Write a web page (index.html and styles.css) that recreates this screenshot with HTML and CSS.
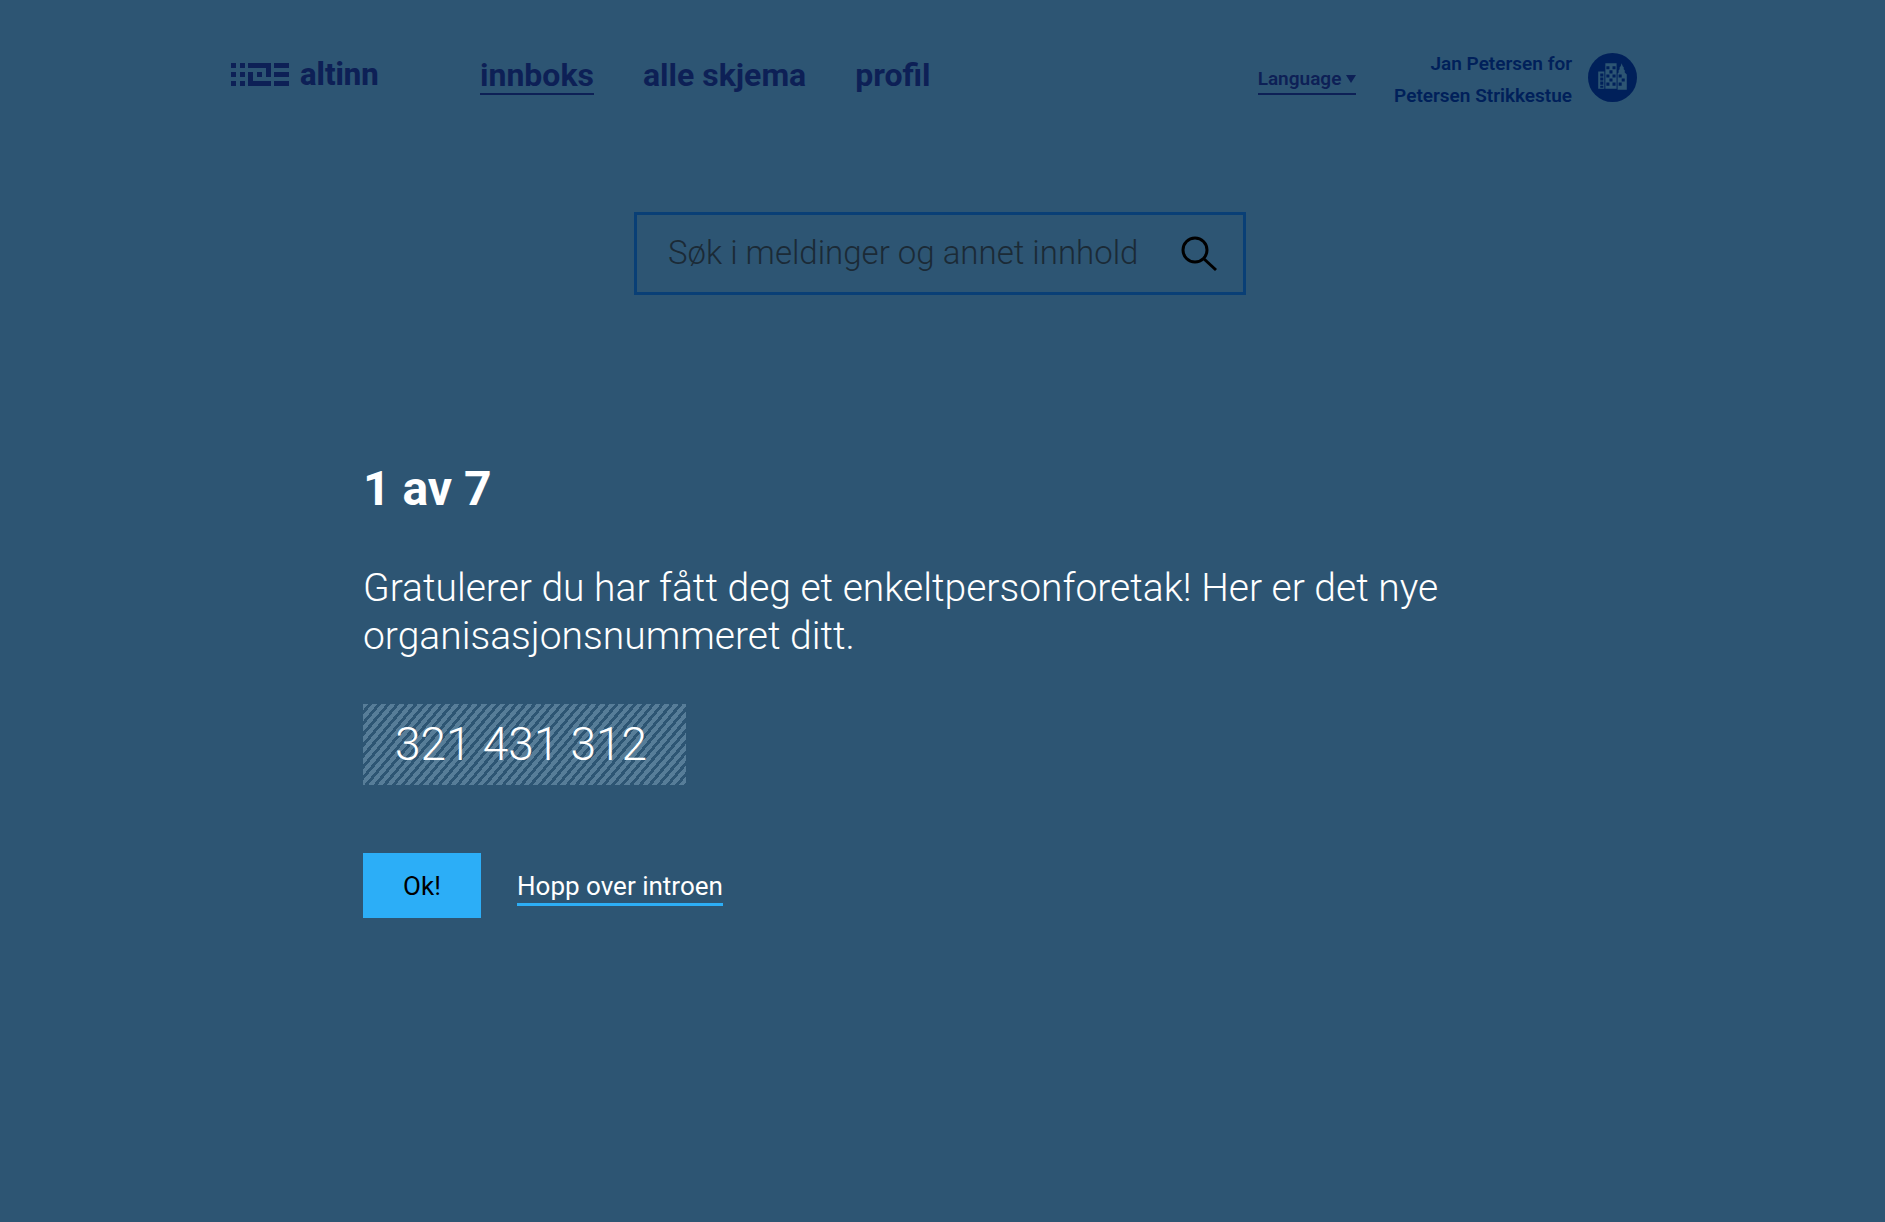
FILE: index.html
```html
<!DOCTYPE html>
<html lang="nb">
<head>
  <meta charset="utf-8">
  <meta name="viewport" content="width=device-width, initial-scale=1">
  <title>altinn – innboks</title>
  <link rel="stylesheet" href="styles.css">
</head>
<body>
  <div class="page">
    <header class="header">
      <a class="logo" href="#">
        <svg class="logo-mark" width="58" height="23" viewBox="0 0 58 23" aria-hidden="true">
          <path d="M0 0h5v5H0zM9 0h5v5H9zM0 9h5v5H0zM9 9h5v5H9zM0 18h5v5H0zM9 18h5v5H9zM26 9h5v5h-5zM43 0h15v5H43zM43 9h15v5H43zM43 18h15v5H43z"/>
          <path d="M17 0h23v14h-5V5H17zM17 9h5v9h18v5H17z"/>
        </svg>
        <span class="logo-name">altinn</span>
      </a>
      <nav class="nav">
        <a class="nav-link nav-link-active" href="#">innboks</a>
        <a class="nav-link" href="#">alle skjema</a>
        <a class="nav-link" href="#">profil</a>
      </nav>
      <button class="language" type="button">Language
        <svg width="10" height="8" viewBox="0 0 10 8" aria-hidden="true"><path d="M0 0h10L5 8z"/></svg>
      </button>
      <a class="account" href="#">
        <span class="account-name">Jan Petersen for<br>Petersen Strikkestue</span>
        <svg class="avatar" width="49" height="49" viewBox="0 0 48 48" aria-hidden="true">
          <circle class="avatar-disc" cx="24" cy="24" r="24"/>
          <path class="avatar-house" d="M10 18h6v17h-6zM17 10h11v25H17zM29 20l1-1v-2l1-1v-2l1-1 1-3 1 3 1 1v2l1 1v2l2 2v15h-9z"/>
          <path class="avatar-window" d="M12 20h3v3h-3zM12 24h3v3h-3zM12 28h3v3h-3zM12 32h3v2h-3zM18 13h3v3h-3zM24 13h3v3h-3zM21 17h3v3h-3zM18 21h3v3h-3zM24 21h3v3h-3zM21 25h3v3h-3zM18 29h3v3h-3zM24 29h3v3h-3zM30 21h3v3h-3zM33 25h3v3h-3zM30 29h3v3h-3z"/>
        </svg>
      </a>
    </header>

    <form class="search" role="search">
      <input class="search-input" type="search" aria-label="Søk i meldinger og annet innhold" placeholder="Søk i meldinger og annet innhold">
      <button class="search-button" type="submit" aria-label="Søk">
        <svg width="36" height="36" viewBox="0 0 36 36" aria-hidden="true"><circle cx="14" cy="14" r="12"/><path d="M22 22l13 12"/></svg>
      </button>
    </form>

    <main class="intro">
      <h1 class="intro-step">1 av 7</h1>
      <p class="intro-text">Gratulerer du har fått deg et enkeltpersonforetak! Her er det nye organisasjonsnummeret ditt.</p>
      <p class="number">321 431 312</p>
      <div class="actions">
        <button class="ok" type="button">Ok!</button>
        <a class="skip" href="#">Hopp over introen</a>
      </div>
    </main>
  </div>
</body>
</html>
```
FILE: styles.css
```css
* {
  box-sizing: border-box;
}

body {
  margin: 0;
  min-height: 100vh;
  background: #2d5573;
  color: #fff;
  font-family: Roboto, "Liberation Sans", sans-serif;
}

a {
  color: inherit;
  text-decoration: none;
}

button {
  margin: 0;
  padding: 0;
  border: 0;
  background: none;
  color: inherit;
  font: inherit;
  cursor: pointer;
}

.page {
  padding: 48px 24px 64px 19px;
}

.header {
  display: flex;
  align-items: flex-start;
  max-width: 1418px;
  margin: 0 auto;
  padding-right: 12px;
  color: #0d2056;
}

.logo {
  display: flex;
  align-items: center;
  gap: 11px;
  width: 249px;
  height: 52px;
  font-size: 31px;
  font-weight: 800;
}

.logo-mark {
  fill: currentColor;
}

.nav {
  display: flex;
  gap: 49px;
  font-size: 32px;
  font-weight: 700;
  line-height: 44px;
}

.nav-link {
  padding-top: 5px;
  white-space: nowrap;
}

.nav-link-active {
  height: 47px;
  border-bottom: 2px solid;
}

.language {
  height: 47px;
  margin-left: auto;
  padding-top: 16px;
  border-bottom: 2px solid;
  font-size: 19px;
  font-weight: 600;
  line-height: 30px;
  white-space: nowrap;
}

.language svg {
  fill: currentColor;
  vertical-align: 2px;
}

.account {
  display: flex;
  align-items: flex-start;
  gap: 16px;
  margin-left: 38px;
  color: #00205a;
}

.account-name {
  font-size: 19px;
  font-weight: 600;
  line-height: 32px;
  text-align: right;
  white-space: nowrap;
}

.avatar {
  margin-top: 5px;
}

.avatar-disc,
.avatar-window {
  fill: #00205a;
}

.avatar-house {
  fill: #2d5573;
}

.search {
  display: flex;
  align-items: center;
  max-width: 612px;
  height: 83px;
  margin: 100px auto 0;
  padding: 0 26px 0 31px;
  border: 3px solid #093f76;
}

.search-input {
  flex: 1;
  min-width: 0;
  padding: 0 0 2px;
  border: 0;
  outline: 0;
  background: none;
  color: #1b2a36;
  font: 300 33px Roboto, "Liberation Sans", sans-serif;
}

.search-input::placeholder {
  color: #1b2a36;
  opacity: 1;
}

.search-button svg {
  display: block;
  fill: none;
  stroke: #000;
  stroke-width: 3;
}

.intro {
  max-width: 1154px;
  margin: 166px auto 0;
}

.intro-step {
  margin: 0;
  font-size: 48px;
  font-weight: 700;
  line-height: 56px;
}

.intro-text {
  margin: 47px 0 0;
  font-size: 39px;
  font-weight: 300;
  line-height: 48px;
}

.number {
  width: fit-content;
  min-width: 323px;
  margin: 44px 0 0;
  padding: 0 32px;
  background: repeating-linear-gradient(130deg, #577d98 0 4px, #2d5573 4px 7px);
  font-size: 46px;
  font-weight: 300;
  line-height: 81px;
}

.actions {
  display: flex;
  align-items: flex-start;
  gap: 36px;
  margin-top: 68px;
  font-size: 26px;
}

.ok {
  width: 118px;
  height: 65px;
  background: #2caef7;
  color: #000;
}

.skip {
  margin-top: 16px;
  border-bottom: 3px solid #2caef7;
  line-height: 34px;
}
```
